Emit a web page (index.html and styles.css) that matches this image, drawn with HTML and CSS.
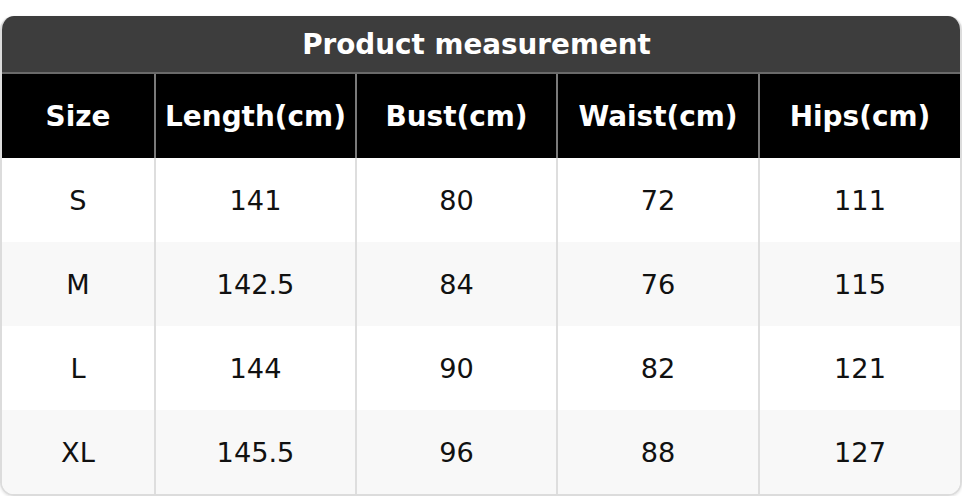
FILE: index.html
```html
<!DOCTYPE html>
<html>
<head>
<meta charset="utf-8">
<link rel="stylesheet" href="styles.css">
</head>
<body>
<div class="card">
  <div class="title">Product measurement</div>
  <div class="grid">
    <div class="cell head">Size</div>
    <div class="cell head">Length(cm)</div>
    <div class="cell head">Bust(cm)</div>
    <div class="cell head">Waist(cm)</div>
    <div class="cell head">Hips(cm)</div>

    <div class="cell">S</div>
    <div class="cell">141</div>
    <div class="cell">80</div>
    <div class="cell">72</div>
    <div class="cell">111</div>

    <div class="cell alt">M</div>
    <div class="cell alt">142.5</div>
    <div class="cell alt">84</div>
    <div class="cell alt">76</div>
    <div class="cell alt">115</div>

    <div class="cell">L</div>
    <div class="cell">144</div>
    <div class="cell">90</div>
    <div class="cell">82</div>
    <div class="cell">121</div>

    <div class="cell alt">XL</div>
    <div class="cell alt">145.5</div>
    <div class="cell alt">96</div>
    <div class="cell alt">88</div>
    <div class="cell alt">127</div>
  </div>
</div>
</body>
</html>
```
FILE: styles.css
```css
html, body {
  margin: 0;
  padding: 0;
  background: #ffffff;
}
body {
  padding-top: 16px;
  font-family: "DejaVu Sans", sans-serif;
}
.card {
  width: 962px;
  box-sizing: border-box;
  border: 2px solid #dcdcdc;
  border-top: none;
  border-radius: 14px;
  overflow: hidden;
  box-shadow: 0 1px 3px rgba(0,0,0,0.12);
}
.title {
  height: 56px;
  background: #3d3d3d;
  color: #ffffff;
  font-weight: bold;
  font-size: 27.8px;
  display: flex;
  align-items: center;
  justify-content: center;
  border-bottom: 2px solid #6a6a6a;
  margin: 0 -2px;
  padding-right: 9px;
}
.grid {
  display: grid;
  grid-template-columns: 152px 201px 201px 202px 1fr;
  grid-auto-rows: 84px;
}
.cell {
  display: flex;
  align-items: center;
  justify-content: center;
  font-size: 27.2px;
  color: #111111;
  background: #ffffff;
  border-left: 2px solid #dedede;
}
.cell:nth-child(5n+1) {
  border-left: none;
}
.cell.alt {
  background: #f8f8f8;
}
.cell.head {
  background: #000000;
  color: #ffffff;
  font-weight: bold;
  font-size: 27.9px;
  border-left-color: #7a7a7a;
}
```
